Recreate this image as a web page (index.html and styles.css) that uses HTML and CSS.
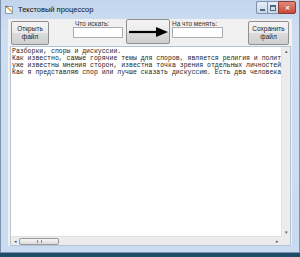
FILE: index.html
```html
<!DOCTYPE html>
<html lang="ru">
<head>
    <meta charset="UTF-8">
    <title>Текстовый процессор</title>
    <link rel="stylesheet" href="styles.css">
</head>
<body>
    <div class="window">
        <div class="titlebar">
            <svg class="app-icon" width="9" height="9" viewBox="0 0 9 9">
                <rect x="0.5" y="1.5" width="7" height="7" fill="#fff" stroke="#8aa0b8"/>
                <path d="M1.5 1.5 L7 7" stroke="#e0a820" stroke-width="1.6"/>
                <path d="M1 1 L2 2" stroke="#3a5a80" stroke-width="1.4"/>
            </svg>
            <span class="title">Текстовый процессор</span>
            <div class="controls">
                <span class="ctl ctl-min"><i class="min-glyph"></i></span>
                <span class="ctl ctl-max"><i class="max-glyph"></i></span>
                <span class="ctl ctl-close">&#x2715;</span>
            </div>
        </div>
        <div class="client">
            <div class="toolbar">
                <button class="btn btn-open">Открыть<br>файл</button>
                <div class="field field-find">
                    <label>Что искать:</label>
                    <input type="text">
                </div>
                <button class="btn btn-arrow">
                    <svg width="40" height="12" viewBox="0 0 40 12">
                        <path d="M1 6 H30" stroke="#000" stroke-width="2.2"/>
                        <path d="M28 1 L40 6 L28 11 Z" fill="#000"/>
                    </svg>
                </button>
                <div class="field field-replace">
                    <label>На что менять:</label>
                    <input type="text">
                </div>
                <button class="btn btn-save">Сохранить<br>файл</button>
            </div>
            <div class="editor">
                <div class="text">
                    <div class="line">Разборки, споры и дискуссии.</div>
                    <div class="line">Как известно, самые горячие темы для споров, является религия и политика.</div>
                    <div class="line">уже известны мнения сторон, известна точка зрения отдельных личностей.</div>
                    <div class="line">Как я представляю спор или лучше сказать дискуссию. Есть два человека.</div>
                </div>
                <div class="vscroll">
                    <span class="arr">&#x25B4;</span>
                    <span class="arr">&#x25BE;</span>
                </div>
                <div class="hscroll">
                    <span class="arr">&#x25C2;</span>
                    <span class="thumb"><i></i></span>
                    <span class="spacer"></span>
                    <span class="arr">&#x25B8;</span>
                </div>
                <div class="corner"></div>
            </div>
        </div>
    </div>
</body>
</html>
```

FILE: styles.css
```css
body {
    margin: 0;
    width: 300px;
    height: 257px;
    background-color: #1d4a66;
    font-family: "Liberation Sans", Arial, sans-serif;
    overflow: hidden;
}
.window {
    width: 300px;
    height: 253px;
    box-sizing: border-box;
    background: linear-gradient(#c2d5ec, #cfdff2 30px, #c8dbf0);
    border: 1px solid #7d93ad;
    border-top: none;
    padding: 0 7px 6px 7px;
    display: flex;
    flex-direction: column;
}
.titlebar {
    height: 20px;
    display: flex;
    align-items: center;
    margin-left: -3px;
    margin-right: -4px;
}
.app-icon {
    margin-right: 4px;
}
.title {
    font-size: 7.5px;
    color: #111;
}
.controls {
    margin-left: auto;
    display: flex;
    align-self: flex-start;
    margin-top: 1px;
}
.ctl {
    height: 11px;
    border: 1px solid #7f93ad;
    display: flex;
    align-items: center;
    justify-content: center;
}
.ctl-min, .ctl-max {
    width: 10px;
    background: linear-gradient(#e6eef8, #c6d6ea);
    border-right: none;
}
.ctl-min {
    border-radius: 2px 0 0 2px;
}
.ctl-close {
    width: 16px;
    background: linear-gradient(#e08a7c, #c74a3a);
    border-color: #8a3a30;
    border-radius: 0 2px 2px 0;
    color: #fff;
    font-size: 6px;
    font-weight: bold;
}
.min-glyph {
    width: 5px;
    height: 2px;
    background: #55657a;
    margin-top: 4px;
}
.max-glyph {
    width: 4px;
    height: 3px;
    border: 1px solid #55657a;
    border-top-width: 2px;
}
.client {
    flex-grow: 1;
    background-color: #f0f0f0;
    display: flex;
    flex-direction: column;
    padding: 0 1px 0 2px;
}
.toolbar {
    height: 27px;
    display: flex;
    align-items: flex-start;
}
.btn {
    font-family: "Liberation Sans", Arial, sans-serif;
    font-size: 6.5px;
    line-height: 8px;
    color: #222;
    border: 1px solid #8e8f8f;
    border-radius: 2px;
    background: linear-gradient(#f4f4f4, #ebebeb 50%, #dcdcdc 51%, #cfcfcf);
    padding: 0;
    box-sizing: border-box;
}
.btn-open {
    width: 38px;
    height: 24px;
    margin-top: 2px;
    margin-left: 1px;
}
.btn-arrow {
    width: 44px;
    height: 25px;
    margin-left: 3px;
    display: flex;
    align-items: center;
    justify-content: center;
}
.btn-save {
    width: 41px;
    height: 24px;
    margin-top: 2px;
    margin-left: 25px;
}
.field {
    display: flex;
    flex-direction: column;
    margin-top: 1px;
}
.field label {
    font-size: 6.5px;
    color: #333;
    height: 7px;
    line-height: 7px;
    padding-left: 2px;
}
.field input {
    height: 11px;
    box-sizing: border-box;
    border: 1px solid #abadb3;
    margin: 0;
    padding: 0;
    background: #fff;
}
.field-find {
    margin-left: 24px;
    width: 50px;
}
.field-find input {
    width: 50px;
}
.field-replace {
    margin-left: 2px;
    width: 51px;
}
.field-replace label {
    padding-left: 0;
}
.field-replace input {
    width: 51px;
}
.editor {
    height: 200px;
    box-sizing: border-box;
    border: 1px solid #b6c4d6;
    background: #fff;
    display: grid;
    grid-template-columns: minmax(0, 1fr) 9px;
    grid-template-rows: minmax(0, 1fr) 9px;
    overflow: hidden;
}
.text {
    font-family: "Liberation Mono", "Courier New", monospace;
    font-size: 6.5px;
    line-height: 7px;
    color: #1c1c28;
    padding: 1px 0 0 1px;
    overflow: hidden;
}
.line {
    white-space: nowrap;
    height: 7px;
}
.vscroll {
    background: #ececec;
    border-left: 1px solid #e2e2e2;
    display: flex;
    flex-direction: column;
    justify-content: space-between;
    align-items: center;
}
.hscroll {
    background: #ececec;
    border-top: 1px solid #e2e2e2;
    display: flex;
    align-items: center;
}
.arr {
    font-size: 5px;
    color: #606060;
    line-height: 8px;
    width: 8px;
    text-align: center;
}
.thumb {
    width: 40px;
    height: 7px;
    box-sizing: border-box;
    border: 1px solid #9a9a9a;
    border-radius: 2px;
    background: linear-gradient(#f6f6f6, #dcdcdc);
    display: flex;
    align-items: center;
    justify-content: center;
}
.thumb i {
    width: 3px;
    height: 3px;
    border-left: 1px solid #888;
    border-right: 1px solid #888;
}
.spacer {
    flex-grow: 1;
}
.corner {
    background: #ececec;
}
```
